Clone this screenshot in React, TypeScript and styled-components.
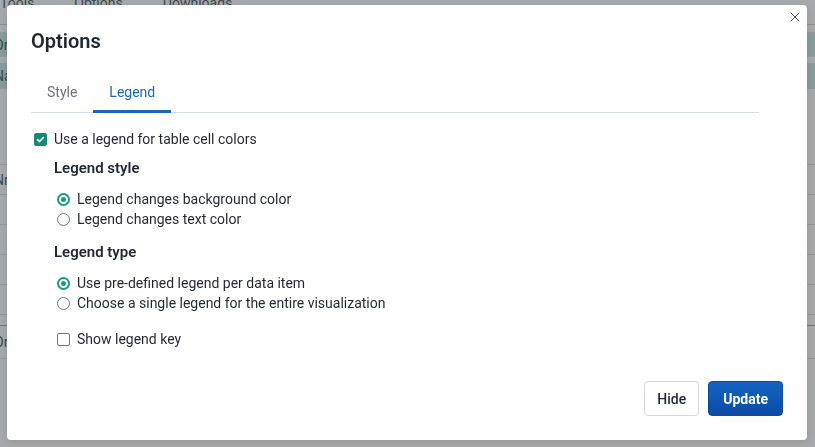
import React from "react";
import styled, { createGlobalStyle } from "styled-components";
import { X } from "lucide-react";

const Global = createGlobalStyle`
  html, body { margin: 0; padding: 0; }
  body {
    width: 815px;
    height: 447px;
    overflow: hidden;
    font-family: Roboto, "Liberation Sans", sans-serif;
    background: #ffffff;
  }
  * { box-sizing: border-box; }
`;

/* ---------- background page ---------- */
const Page = styled.div`
  display: flex;
  flex-direction: column;
  width: 815px;
  height: 447px;
  color: #333a44;
  font-size: 14px;
`;

const TopBar = styled.div`
  display: flex;
  gap: 40px;
  height: 25px;
  border-bottom: 1px solid #c9ccd1;
  line-height: 10px;
  overflow: hidden;
`;

const TopItem = styled.span`
  margin-top: -2px;
`;

const Row = styled.div<{ $h: number; $teal?: boolean; $strong?: boolean }>`
  display: flex;
  align-items: center;
  height: ${(p) => p.$h}px;
  border-bottom: 1px solid ${(p) => (p.$strong ? "#8a9099" : "#d9dce0")};
  background: ${(p) => (p.$teal ? "#bfe3dc" : "transparent")};
  margin-bottom: ${(p) => (p.$teal ? 6 : 0)}px;
  font-size: 14px;
`;

const CellText = styled.span`
  margin-left: -6px;
`;

const Overlay = styled.div`
  position: fixed;
  inset: 0;
  background: rgba(80, 85, 90, 0.5);
  display: flex;
  align-items: flex-start;
  justify-content: center;
  padding-top: 5px;
`;

/* ---------- modal ---------- */
const Modal = styled.div`
  position: relative;
  width: 800px;
  height: 435px;
  margin-right: 1px;
  background: #ffffff;
  border-radius: 4px;
  display: flex;
  flex-direction: column;
  color: #1f2733;
  box-shadow: 0 2px 10px rgba(0, 0, 0, 0.12);
`;

const CloseButton = styled.button`
  position: absolute;
  top: 4px;
  right: 4px;
  width: 16px;
  height: 16px;
  padding: 0;
  border: none;
  background: none;
  display: flex;
  align-items: center;
  justify-content: center;
  color: #3f4a5a;
  cursor: pointer;
`;

const Body = styled.div`
  display: flex;
  flex-direction: column;
  padding: 24px 24px 0 24px;
`;

const Title = styled.h2`
  margin: 0;
  font-size: 20px;
  line-height: 24px;
  font-weight: 600;
  color: #1f2733;
`;

const TabList = styled.div`
  display: flex;
  margin: 19px 24px 0 0;
  border-bottom: 1px solid #d5dce4;
`;

const Tab = styled.button<{ $active?: boolean }>`
  padding: 10px 16px 8px 16px;
  margin-bottom: -1px;
  border: none;
  border-bottom: 3px solid ${(p) => (p.$active ? "#1766c2" : "transparent")};
  background: none;
  font-family: inherit;
  font-size: 14px;
  line-height: 20px;
  font-weight: 400;
  color: ${(p) => (p.$active ? "#1766c2" : "#6b7280")};
  cursor: pointer;
`;

const Content = styled.div`
  display: flex;
  flex-direction: column;
  padding-top: 16px;
`;

const Section = styled.div`
  display: flex;
  flex-direction: column;
  padding-left: 23px;
`;

const Heading = styled.div<{ $top: number }>`
  margin-top: ${(p) => p.$top}px;
  margin-bottom: 11px;
  font-size: 15px;
  line-height: 20px;
  font-weight: 600;
  color: #1f2733;
`;

const Option = styled.label<{ $top?: number }>`
  display: flex;
  align-items: center;
  gap: 7px;
  margin-left: 3px;
  margin-top: ${(p) => p.$top ?? 0}px;
  font-size: 14px;
  line-height: 20px;
  color: #1f2733;
`;

const Box = styled.span<{ $checked?: boolean }>`
  width: 13px;
  height: 13px;
  border-radius: 2px;
  flex: none;
  display: flex;
  align-items: center;
  justify-content: center;
  background: ${(p) => (p.$checked ? "#138a74" : "#ffffff")};
  border: 1px solid ${(p) => (p.$checked ? "#138a74" : "#6b7280")};
`;

const Radio = styled.span<{ $checked?: boolean }>`
  width: 13px;
  height: 13px;
  border-radius: 50%;
  flex: none;
  display: flex;
  align-items: center;
  justify-content: center;
  border: ${(p) => (p.$checked ? "2px solid #169a84" : "1px solid #6b7280")};
  background: #ffffff;
  &::after {
    content: "";
    display: ${(p) => (p.$checked ? "block" : "none")};
    width: 5px;
    height: 5px;
    border-radius: 50%;
    background: #169a84;
  }
`;

const Footer = styled.div`
  margin-top: auto;
  display: flex;
  justify-content: flex-end;
  gap: 9px;
  padding: 0 24px 24px 24px;
`;

const Button = styled.button<{ $primary?: boolean }>`
  height: 35px;
  padding: 0 ${(p) => (p.$primary ? 14 : 12)}px;
  border-radius: 4px;
  font-family: inherit;
  font-size: 14px;
  font-weight: ${(p) => (p.$primary ? 700 : 500)};
  color: ${(p) => (p.$primary ? "#ffffff" : "#1f2733")};
  border: 1px solid ${(p) => (p.$primary ? "#0a4a9c" : "#d3d7dd")};
  background: ${(p) =>
    p.$primary ? "linear-gradient(#1563c4, #0a4ca4)" : "#ffffff"};
  cursor: pointer;
`;

const Check = () => (
  <svg width="9" height="9" viewBox="0 0 10 10" fill="none">
    <path d="M1.8 5.2 L4 7.3 L8.2 2.8" stroke="#fff" strokeWidth="1.8" strokeLinecap="round" strokeLinejoin="round" />
  </svg>
);

export default function App() {
  return (
    <>
      <Global />
      <Page>
        <TopBar>
          <TopItem>Tools</TopItem>
          <TopItem>Options</TopItem>
          <TopItem>Downloads</TopItem>
        </TopBar>
        <Row $h={8} />
        <Row $h={24} $teal><CellText>Org</CellText></Row>
        <Row $h={26} $teal><CellText>Name</CellText></Row>
        <Row $h={70} />
        <Row $h={30}><CellText>Nr</CellText></Row>
        <Row $h={30} />
        <Row $h={30} />
        <Row $h={30} />
        <Row $h={30} />
        <Row $h={11} $strong />
        <Row $h={33}><CellText>Org</CellText></Row>
      </Page>
      <Overlay>
        <Modal role="dialog" aria-label="Options">
          <CloseButton aria-label="Close">
            <X size={16} strokeWidth={1.5} />
          </CloseButton>
          <Body>
            <Title>Options</Title>
            <TabList>
              <Tab>Style</Tab>
              <Tab $active>Legend</Tab>
            </TabList>
            <Content>
              <Option>
                <Box $checked><Check /></Box>
                Use a legend for table cell colors
              </Option>
              <Section>
                <Heading $top={9}>Legend style</Heading>
                <Option>
                  <Radio $checked />
                  Legend changes background color
                </Option>
                <Option>
                  <Radio />
                  Legend changes text color
                </Option>
                <Heading $top={13}>Legend type</Heading>
                <Option>
                  <Radio $checked />
                  Use pre-defined legend per data item
                </Option>
                <Option>
                  <Radio />
                  Choose a single legend for the entire visualization
                </Option>
                <Option $top={16}>
                  <Box />
                  Show legend key
                </Option>
              </Section>
            </Content>
          </Body>
          <Footer>
            <Button>Hide</Button>
            <Button $primary>Update</Button>
          </Footer>
        </Modal>
      </Overlay>
    </>
  );
}
